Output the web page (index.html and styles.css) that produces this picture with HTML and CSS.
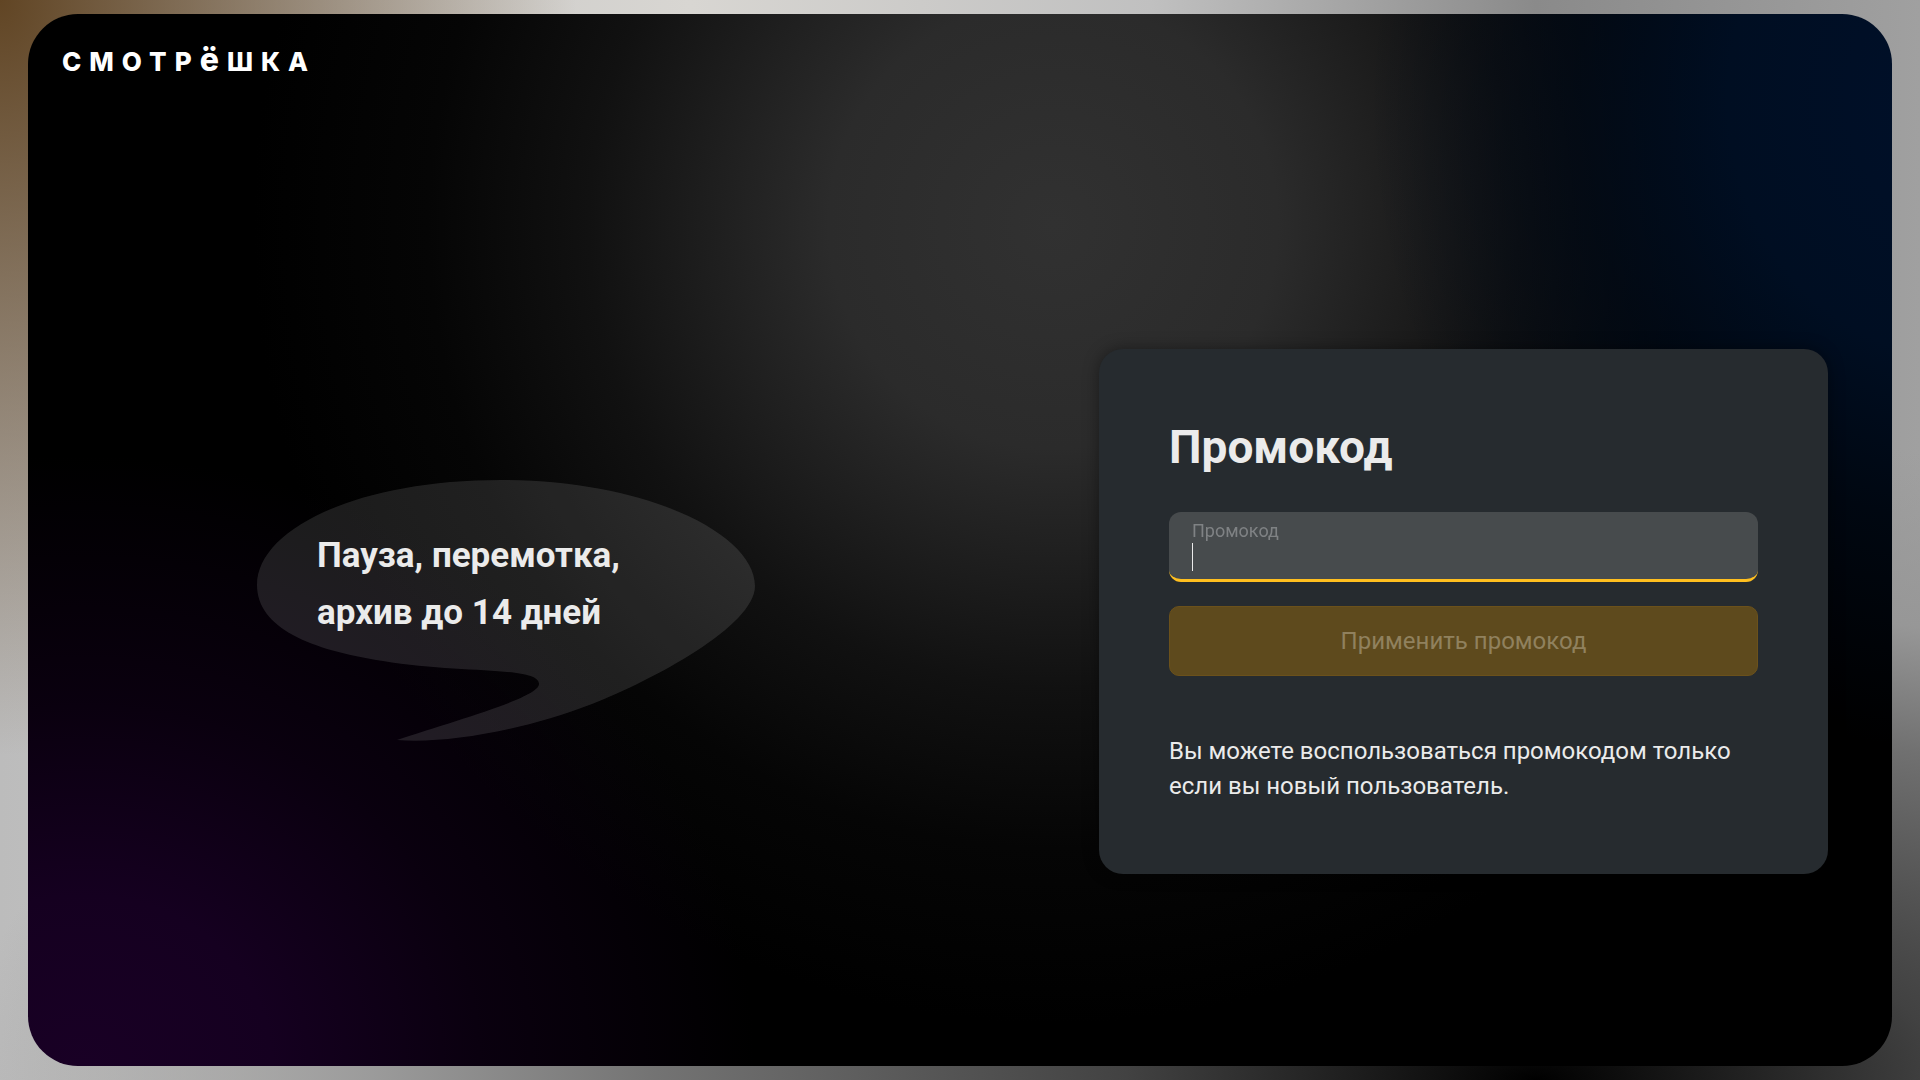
FILE: index.html
```html
<!DOCTYPE html>
<html lang="ru">
<head>
  <meta charset="UTF-8">
  <meta name="viewport" content="width=device-width, initial-scale=1.0">
  <title>Смотрёшка</title>
  <link rel="stylesheet" href="styles.css">
</head>
<body>
  <div class="screen">
    <header class="header">
      <a href="#" class="logo">СМОТР<span class="logo-yo">ё</span>ШКА</a>
    </header>

    <main class="content">
      <div class="bubble">
        <svg class="bubble-shape" viewBox="0 0 498 262" aria-hidden="true">
          <path d="M244 0 C390 0 498 54 498 106 C498 146 396 200 335 224 C268 250 190 264 140 260 C196 241 282 218 282 204 C282 186 202 194 126 181 C54 170 0 148 0 105 C0 50 98 0 244 0 Z" />
        </svg>
        <p class="bubble-text">Пауза, перемотка,<br>архив до 14 дней</p>
      </div>

      <form class="card">
        <h1>Промокод</h1>
        <div class="field">
          <label for="promo">Промокод</label>
          <input type="text" id="promo" autocomplete="off" autofocus>
          <span class="caret"></span>
        </div>
        <button type="submit" class="button" disabled>Применить промокод</button>
        <p class="note">Вы можете воспользоваться промокодом только если вы новый пользователь.</p>
      </form>
    </main>
  </div>
</body>
</html>
```

FILE: styles.css
```css
* {
  box-sizing: border-box;
}

/* Backdrop that shows around the screen */
body {
  margin: 0;
  min-height: 100vh;
  padding: 14px 28px;
  display: flex;
  font-family: Roboto, sans-serif;
  color: #ebebeb;
  background:
    radial-gradient(ellipse 30% 70% at 0% 0%, #614524 0%, rgba(97, 69, 36, 0) 100%),
    radial-gradient(ellipse 82% 60% at 80% 100%, #000 0%, #424242 26%, rgba(110, 110, 110, 0.95) 56%, rgba(150, 150, 150, 0.9) 74%, rgba(170, 170, 170, 0) 100%),
    linear-gradient(90deg, #bcbcbc 0%, #d8d6d2 36%, #c0c0c0 60%, #8a8a8a 80%, #a0a0a0 100%);
}

.screen {
  flex: 1;
  display: flex;
  flex-direction: column;
  border-radius: 50px;
  background:
    radial-gradient(ellipse 36% 58% at 3% 100%, #190025 0%, #150020 28%, rgba(12, 0, 18, 0.8) 60%, rgba(0, 0, 0, 0) 100%),
    radial-gradient(ellipse 32% 62% at 104% 8%, #00102a 0%, #000e22 40%, rgba(0, 10, 24, 0.7) 65%, rgba(0, 0, 0, 0) 100%),
    radial-gradient(ellipse 43% 76% at 55% 20%, #313131 0%, #2b2b2b 28%, #111 58%, #050505 78%, #000 100%);
}

.header {
  padding: 28px 34px 0;
}

.logo {
  font-family: Inter, sans-serif;
  font-size: 26px;
  font-weight: 800;
  line-height: 40px;
  letter-spacing: 8px;
  color: #fff;
  text-decoration: none;
}

.logo-yo {
  font-size: 32px;
  line-height: 1;
}

.content {
  flex: 1;
  display: grid;
  grid-template-columns: 1fr 729px;
  align-items: center;
  padding: 115px 64px 41px 229px;
}

/* Speech bubble */
.bubble {
  display: grid;
  width: 498px;
}

.bubble-shape,
.bubble-text {
  grid-area: 1 / 1;
}

.bubble-shape {
  width: 100%;
  fill: rgba(255, 255, 255, 0.11);
}

.bubble-text {
  margin: 0;
  padding: 47px 60px;
  font-size: 35px;
  font-weight: 700;
  line-height: 57px;
}

/* Promo code form */
.card {
  padding: 70px;
  border-radius: 24px;
  background: #262b2f;
  box-shadow: 0 0 16px rgba(0, 0, 0, 0.4);
}

h1 {
  margin: 0 0 36px;
  font-size: 46px;
  font-weight: 700;
  line-height: 57px;
}

.field {
  position: relative;
  height: 70px;
  margin-bottom: 24px;
  border-radius: 12px;
  background: #474b4d;
  border-bottom: 3px solid #ffbf1f;
}

.field label {
  position: absolute;
  top: 8px;
  left: 23px;
  font-size: 18px;
  line-height: 22px;
  color: #7f8284;
}

.field input {
  width: 100%;
  height: 67px;
  padding: 24px 23px 4px;
  border: 0;
  outline: none;
  background: none;
  font: 24px Roboto, sans-serif;
  color: #ebebeb;
  caret-color: transparent;
}

.caret {
  position: absolute;
  top: 31px;
  left: 23px;
  width: 1px;
  height: 28px;
  background: #ebebeb;
}

.button {
  display: block;
  width: 100%;
  height: 70px;
  margin-bottom: 58px;
  border: 1px solid #6b511b;
  border-radius: 10px;
  background: #5e4a1d;
  font: 400 24px Roboto, sans-serif;
  color: #90815e;
}

.note {
  margin: 0;
  font-size: 24px;
  line-height: 35px;
}
```
